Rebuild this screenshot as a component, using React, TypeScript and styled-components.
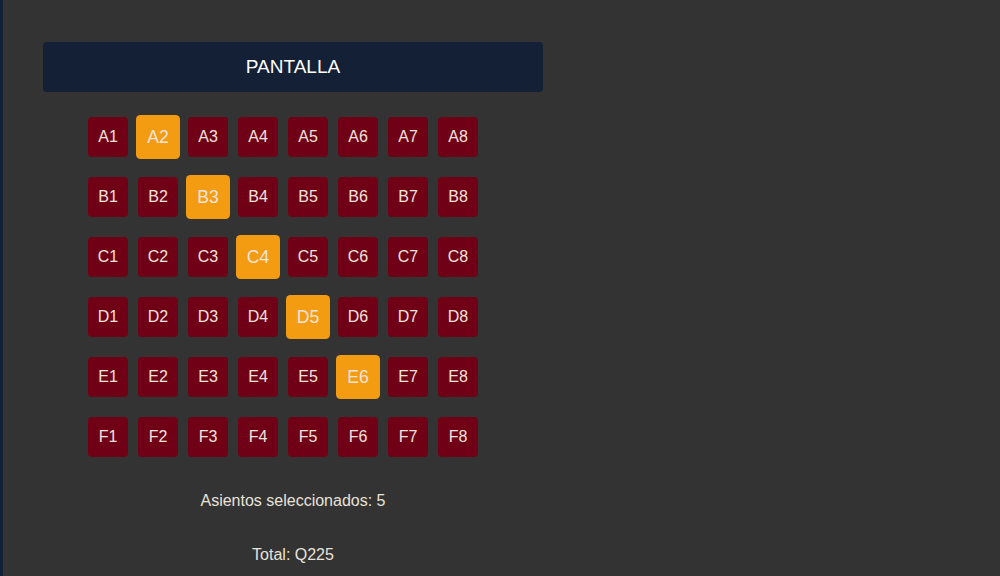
import React from "react";
import styled, { createGlobalStyle } from "styled-components";

const GlobalStyle = createGlobalStyle`
  html, body { margin: 0; padding: 0; background: #333333; }
  body { font-family: "Liberation Sans", Arial, sans-serif; }
`;

const Page = styled.div`
  display: flex;
  min-height: 576px;
  background: #333333;
`;

const Strip = styled.div`
  width: 3px;
  flex: none;
  background: #13203a;
`;

const Main = styled.main`
  flex: 1;
  padding: 42px 40px 0 40px;
`;

const Cinema = styled.section`
  width: 500px;
  display: flex;
  flex-direction: column;
  align-items: center;
`;

const Screen = styled.div`
  width: 100%;
  height: 50px;
  background: #132035;
  border-radius: 4px;
  color: #ffffff;
  font-size: 19px;
  display: flex;
  align-items: center;
  justify-content: center;
  margin-bottom: 15px;
`;

const Grid = styled.div`
  width: 420px;
  display: flex;
  flex-wrap: wrap;
`;

const Seat = styled.button<{ $selected?: boolean }>`
  width: 40px;
  height: 40px;
  margin: 10px 5px;
  padding: 0;
  border: none;
  border-radius: 4px;
  background: ${(p) => (p.$selected ? "#f39c12" : "#700016")};
  color: #f3e3dc;
  font-family: "Liberation Sans", Arial, sans-serif;
  font-size: 16px;
  display: flex;
  align-items: center;
  justify-content: center;
  transform: ${(p) => (p.$selected ? "scale(1.1)" : "none")};
`;

const Info = styled.p`
  margin: 24px 0 0 0;
  color: #e8e2da;
  font-size: 16px;
  line-height: 20px;
  & + & {
    margin-top: 34px;
  }
`;

const rows = ["A", "B", "C", "D", "E", "F"];
const selected = new Set(["A2", "B3", "C4", "D5", "E6"]);

export default function App() {
  return (
    <>
      <GlobalStyle />
      <Page>
        <Strip />
        <Main>
          <Cinema>
            <Screen>PANTALLA</Screen>
            <Grid>
              {rows.map((r) =>
                Array.from({ length: 8 }, (_, i) => {
                  const id = `${r}${i + 1}`;
                  return (
                    <Seat key={id} $selected={selected.has(id)}>
                      {id}
                    </Seat>
                  );
                })
              )}
            </Grid>
            <Info>Asientos seleccionados: {selected.size}</Info>
            <Info>Total: Q{selected.size * 45}</Info>
          </Cinema>
        </Main>
      </Page>
    </>
  );
}
